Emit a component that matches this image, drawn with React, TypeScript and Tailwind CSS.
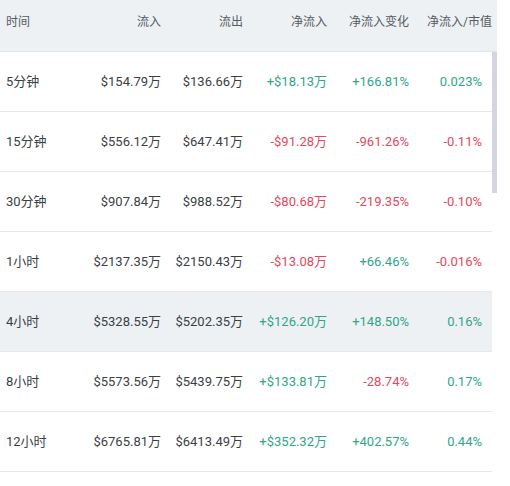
import React from 'react';

type Row = {
  period: string;
  inflow: string;
  outflow: string;
  net: string;
  change: string;
  ratio: string;
  hover?: boolean;
};

const rows: Row[] = [
  { period: '5分钟', inflow: '$154.79万', outflow: '$136.66万', net: '+$18.13万', change: '+166.81%', ratio: '0.023%' },
  { period: '15分钟', inflow: '$556.12万', outflow: '$647.41万', net: '-$91.28万', change: '-961.26%', ratio: '-0.11%' },
  { period: '30分钟', inflow: '$907.84万', outflow: '$988.52万', net: '-$80.68万', change: '-219.35%', ratio: '-0.10%' },
  { period: '1小时', inflow: '$2137.35万', outflow: '$2150.43万', net: '-$13.08万', change: '+66.46%', ratio: '-0.016%' },
  { period: '4小时', inflow: '$5328.55万', outflow: '$5202.35万', net: '+$126.20万', change: '+148.50%', ratio: '0.16%', hover: true },
  { period: '8小时', inflow: '$5573.56万', outflow: '$5439.75万', net: '+$133.81万', change: '-28.74%', ratio: '0.17%' },
  { period: '12小时', inflow: '$6765.81万', outflow: '$6413.49万', net: '+$352.32万', change: '+402.57%', ratio: '0.44%' },
];

const cols = 'grid grid-cols-[88px_81px_82px_84px_82px_75px]';

// sign decides colour, ratio column has no "+" so fall back to "-"
const tone = (v: string) => (v.startsWith('-') ? 'text-[#e5485b]' : 'text-[#2fa68a]');

export default function App() {
  return (
    <div
      className="w-[510px] h-[486px] bg-white overflow-hidden"
      style={{ fontFamily: 'Roboto, "Noto Sans CJK SC", sans-serif' }}
    >
      <div className="w-[497px]">
        <div className={`${cols} h-[52px] bg-[#eef1f4] border-b border-[#e3e6ea] pr-[5px] text-[12px] leading-4 text-[#555b63]`}>
          <div className="pl-[6px] pt-[14px]">时间</div>
          <div className="pr-2 pt-[14px] text-right">流入</div>
          <div className="pr-2 pt-[14px] text-right">流出</div>
          <div className="pr-2 pt-[14px] text-right">净流入</div>
          <div className="pr-2 pt-[14px] text-right">净流入变化</div>
          <div className="pt-[14px] text-right whitespace-nowrap">净流入/市值</div>
        </div>

        <div className="flex">
          <div className="w-[492px]">
            {rows.map((r) => (
              <div
                key={r.period}
                className={`${cols} h-[60px] items-center border-b border-[#e6e8eb] text-[13px] ${r.hover ? 'bg-[#eef1f4]' : 'bg-white'}`}
              >
                <div className="pl-[6px] text-[#3a3f45]">{r.period}</div>
                <div className="pr-2 text-right text-[#3a3f45] whitespace-nowrap">{r.inflow}</div>
                <div className="pr-2 text-right text-[#3a3f45] whitespace-nowrap">{r.outflow}</div>
                <div className={`pr-2 text-right whitespace-nowrap ${tone(r.net)}`}>{r.net}</div>
                <div className={`pr-2 text-right whitespace-nowrap ${tone(r.change)}`}>{r.change}</div>
                <div className={`pr-[10px] text-right whitespace-nowrap ${tone(r.ratio)}`}>{r.ratio}</div>
              </div>
            ))}
          </div>
          <div className="w-[5px]">
            <div className="h-[141px] bg-[#d5d5e1]" />
          </div>
        </div>
      </div>
    </div>
  );
}
